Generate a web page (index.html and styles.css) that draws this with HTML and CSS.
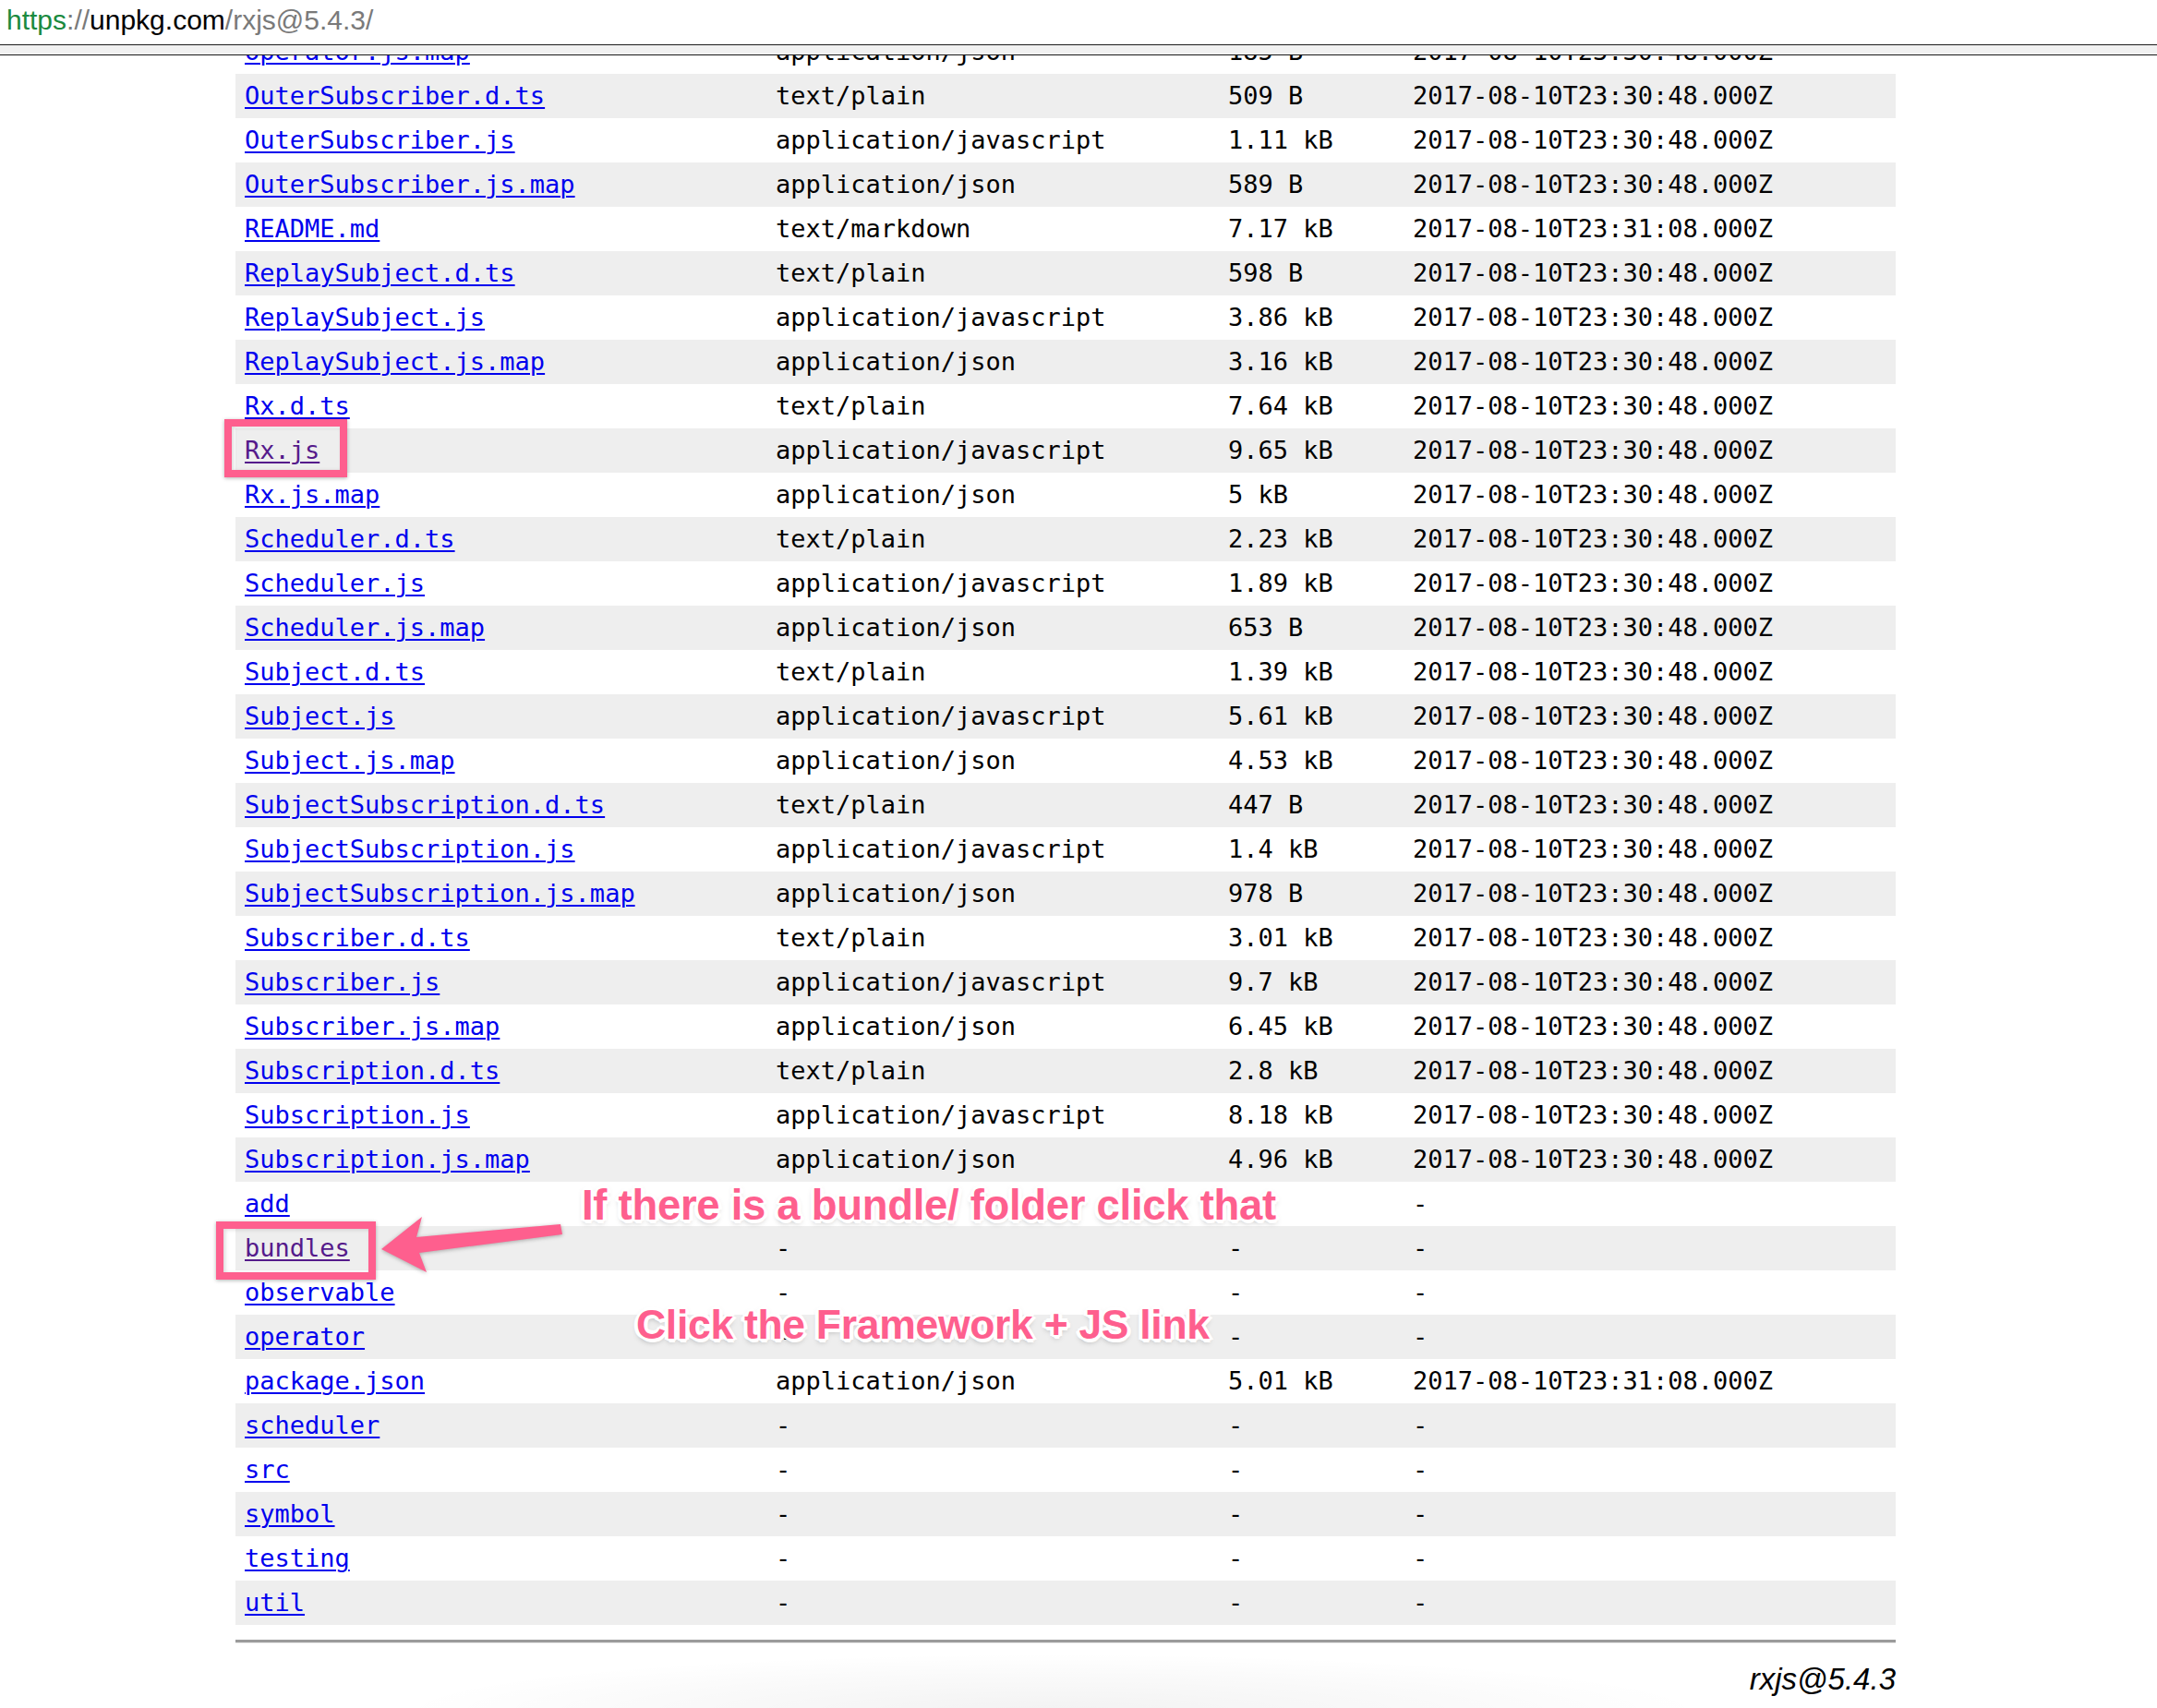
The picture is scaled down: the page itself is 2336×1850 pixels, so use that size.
FILE: index.html
```html
<!DOCTYPE html>
<html>
<head>
<meta charset="utf-8">
<title>unpkg rxjs@5.4.3</title>
<link rel="stylesheet" href="styles.css">
</head>
<body>
<div class="urlbar"><span class="scheme">https</span><span class="sep">://</span><span class="host">unpkg.com</span><span class="path">/rxjs@5.4.3/</span></div>
<div class="band"></div>
<div class="viewport">
  <div class="page">
    <table class="files">
      <colgroup><col class="c-name"><col class="c-type"><col class="c-size"><col class="c-date"></colgroup>
      <tbody>
        <tr><td><a href="#">operator.js.map</a></td><td>application/json</td><td>185 B</td><td>2017-08-10T23:30:48.000Z</td></tr>
        <tr><td><a href="#">OuterSubscriber.d.ts</a></td><td>text/plain</td><td>509 B</td><td>2017-08-10T23:30:48.000Z</td></tr>
        <tr><td><a href="#">OuterSubscriber.js</a></td><td>application/javascript</td><td>1.11 kB</td><td>2017-08-10T23:30:48.000Z</td></tr>
        <tr><td><a href="#">OuterSubscriber.js.map</a></td><td>application/json</td><td>589 B</td><td>2017-08-10T23:30:48.000Z</td></tr>
        <tr><td><a href="#">README.md</a></td><td>text/markdown</td><td>7.17 kB</td><td>2017-08-10T23:31:08.000Z</td></tr>
        <tr><td><a href="#">ReplaySubject.d.ts</a></td><td>text/plain</td><td>598 B</td><td>2017-08-10T23:30:48.000Z</td></tr>
        <tr><td><a href="#">ReplaySubject.js</a></td><td>application/javascript</td><td>3.86 kB</td><td>2017-08-10T23:30:48.000Z</td></tr>
        <tr><td><a href="#">ReplaySubject.js.map</a></td><td>application/json</td><td>3.16 kB</td><td>2017-08-10T23:30:48.000Z</td></tr>
        <tr><td><a href="#">Rx.d.ts</a></td><td>text/plain</td><td>7.64 kB</td><td>2017-08-10T23:30:48.000Z</td></tr>
        <tr><td><a href="#" class="visited">Rx.js</a></td><td>application/javascript</td><td>9.65 kB</td><td>2017-08-10T23:30:48.000Z</td></tr>
        <tr><td><a href="#">Rx.js.map</a></td><td>application/json</td><td>5 kB</td><td>2017-08-10T23:30:48.000Z</td></tr>
        <tr><td><a href="#">Scheduler.d.ts</a></td><td>text/plain</td><td>2.23 kB</td><td>2017-08-10T23:30:48.000Z</td></tr>
        <tr><td><a href="#">Scheduler.js</a></td><td>application/javascript</td><td>1.89 kB</td><td>2017-08-10T23:30:48.000Z</td></tr>
        <tr><td><a href="#">Scheduler.js.map</a></td><td>application/json</td><td>653 B</td><td>2017-08-10T23:30:48.000Z</td></tr>
        <tr><td><a href="#">Subject.d.ts</a></td><td>text/plain</td><td>1.39 kB</td><td>2017-08-10T23:30:48.000Z</td></tr>
        <tr><td><a href="#">Subject.js</a></td><td>application/javascript</td><td>5.61 kB</td><td>2017-08-10T23:30:48.000Z</td></tr>
        <tr><td><a href="#">Subject.js.map</a></td><td>application/json</td><td>4.53 kB</td><td>2017-08-10T23:30:48.000Z</td></tr>
        <tr><td><a href="#">SubjectSubscription.d.ts</a></td><td>text/plain</td><td>447 B</td><td>2017-08-10T23:30:48.000Z</td></tr>
        <tr><td><a href="#">SubjectSubscription.js</a></td><td>application/javascript</td><td>1.4 kB</td><td>2017-08-10T23:30:48.000Z</td></tr>
        <tr><td><a href="#">SubjectSubscription.js.map</a></td><td>application/json</td><td>978 B</td><td>2017-08-10T23:30:48.000Z</td></tr>
        <tr><td><a href="#">Subscriber.d.ts</a></td><td>text/plain</td><td>3.01 kB</td><td>2017-08-10T23:30:48.000Z</td></tr>
        <tr><td><a href="#">Subscriber.js</a></td><td>application/javascript</td><td>9.7 kB</td><td>2017-08-10T23:30:48.000Z</td></tr>
        <tr><td><a href="#">Subscriber.js.map</a></td><td>application/json</td><td>6.45 kB</td><td>2017-08-10T23:30:48.000Z</td></tr>
        <tr><td><a href="#">Subscription.d.ts</a></td><td>text/plain</td><td>2.8 kB</td><td>2017-08-10T23:30:48.000Z</td></tr>
        <tr><td><a href="#">Subscription.js</a></td><td>application/javascript</td><td>8.18 kB</td><td>2017-08-10T23:30:48.000Z</td></tr>
        <tr><td><a href="#">Subscription.js.map</a></td><td>application/json</td><td>4.96 kB</td><td>2017-08-10T23:30:48.000Z</td></tr>
        <tr><td><a href="#">add</a></td><td>-</td><td>-</td><td>-</td></tr>
        <tr><td><a href="#" class="visited">bundles</a></td><td>-</td><td>-</td><td>-</td></tr>
        <tr><td><a href="#">observable</a></td><td>-</td><td>-</td><td>-</td></tr>
        <tr><td><a href="#">operator</a></td><td>-</td><td>-</td><td>-</td></tr>
        <tr><td><a href="#">package.json</a></td><td>application/json</td><td>5.01 kB</td><td>2017-08-10T23:31:08.000Z</td></tr>
        <tr><td><a href="#">scheduler</a></td><td>-</td><td>-</td><td>-</td></tr>
        <tr><td><a href="#">src</a></td><td>-</td><td>-</td><td>-</td></tr>
        <tr><td><a href="#">symbol</a></td><td>-</td><td>-</td><td>-</td></tr>
        <tr><td><a href="#">testing</a></td><td>-</td><td>-</td><td>-</td></tr>
        <tr><td><a href="#">util</a></td><td>-</td><td>-</td><td>-</td></tr>
      </tbody>
    </table>
    <hr class="rule">
    <div class="footer">rxjs@5.4.3</div>
  </div>
</div>

<div class="window-shadow"></div>
<div class="mark mark-rx"></div>
<div class="mark mark-bundles"></div>
<svg class="arrow" width="2336" height="1850" viewBox="0 0 2336 1850">
  <polygon points="413,1353 457,1318 451,1340 607,1326 609,1337 454,1357 462,1378" fill="#fe5f8e"/>
</svg>
<div class="note note-bundle">If there is a bundle/ folder click that</div>
<div class="note note-link">Click the Framework + JS link</div>
</body>
</html>
```

FILE: styles.css
```css
html, body {
  margin: 0;
  padding: 0;
  background: #ffffff;
}

body {
  position: relative;
  width: 2336px;
  height: 1850px;
  overflow: hidden;
}

.urlbar {
  height: 48px;
  padding-left: 7px;
  box-sizing: border-box;
  font-family: "Liberation Sans", Arial, sans-serif;
  font-size: 30px;
  line-height: 44px;
  white-space: nowrap;
}

.scheme { color: #1b8a3e; }
.sep { color: #7a7a7a; }
.host { color: #000000; }
.path { color: #7a7a7a; }

.band {
  height: 10px;
  background: #f1f1f1;
  border-top: 1px solid #1c1c1c;
  border-bottom: 1px solid #1c1c1c;
}

.viewport {
  height: 1790px;
  overflow: hidden;
}

.page {
  margin-top: -28px;
  margin-left: 255px;
  width: 1798px;
}

.files {
  width: 100%;
  border-collapse: collapse;
  table-layout: fixed;
  font-family: "DejaVu Sans Mono", "Liberation Mono", monospace;
  font-size: 27px;
  color: #000000;
}

.c-name { width: 575px; }
.c-type { width: 490px; }
.c-size { width: 200px; }
.c-date { width: 533px; }

.files td {
  height: 48px;
  padding: 0 0 0 10px;
  line-height: 48px;
  white-space: nowrap;
  overflow: hidden;
}

.files tr:nth-child(even) {
  background: #eeeeee;
}

.files a {
  color: #0000ee;
  text-decoration: underline;
  text-decoration-thickness: 2px;
  text-underline-offset: 3px;
}

.files a.visited {
  color: #551a8b;
}

.rule {
  margin: 16px 0 0 0;
  border: 0;
  height: 3px;
  background: #9b9b9b;
  border-bottom: 1px solid #e8e8e8;
}

.footer {
  margin-top: 20px;
  text-align: right;
  font-family: "Liberation Sans", Arial, sans-serif;
  font-style: italic;
  font-size: 33px;
  color: #000000;
}

.window-shadow {
  position: absolute;
  left: 420px;
  top: 1790px;
  width: 1440px;
  height: 130px;
  background: radial-gradient(ellipse at center, rgba(0,0,0,0.05) 0%, rgba(0,0,0,0.02) 45%, rgba(0,0,0,0) 70%);
  pointer-events: none;
}

.mark {
  position: absolute;
  box-sizing: border-box;
  border: 8px solid #fe5f8e;
  box-shadow: 0 1px 4px rgba(0,0,0,0.3), inset 2px 1px 4px rgba(0,0,0,0.15);
}

.mark-rx {
  left: 243px;
  top: 454px;
  width: 133px;
  height: 63px;
}

.mark-bundles {
  left: 234px;
  top: 1323px;
  width: 173px;
  height: 63px;
}

.arrow {
  position: absolute;
  left: 0;
  top: 0;
  filter: drop-shadow(0 1px 2px rgba(0,0,0,0.3));
  pointer-events: none;
}

.note {
  position: absolute;
  font-family: "Liberation Sans", Arial, sans-serif;
  font-weight: bold;
  line-height: 50px;
  color: #fe5f8e;
  white-space: nowrap;
  letter-spacing: -0.3px;
  text-shadow:
    3px 0 0 #fff, -3px 0 0 #fff, 0 3px 0 #fff, 0 -3px 0 #fff,
    2px 2px 0 #fff, -2px 2px 0 #fff, 2px -2px 0 #fff, -2px -2px 0 #fff,
    4px 1px 0 #fff, -4px 1px 0 #fff, 1px 4px 0 #fff, 1px -4px 0 #fff,
    0 3px 6px rgba(0,0,0,0.35);
}

.note-bundle {
  left: 630px;
  top: 1281px;
  font-size: 45.5px;
}

.note-link {
  left: 689px;
  top: 1410px;
  font-size: 44.5px;
}
```
